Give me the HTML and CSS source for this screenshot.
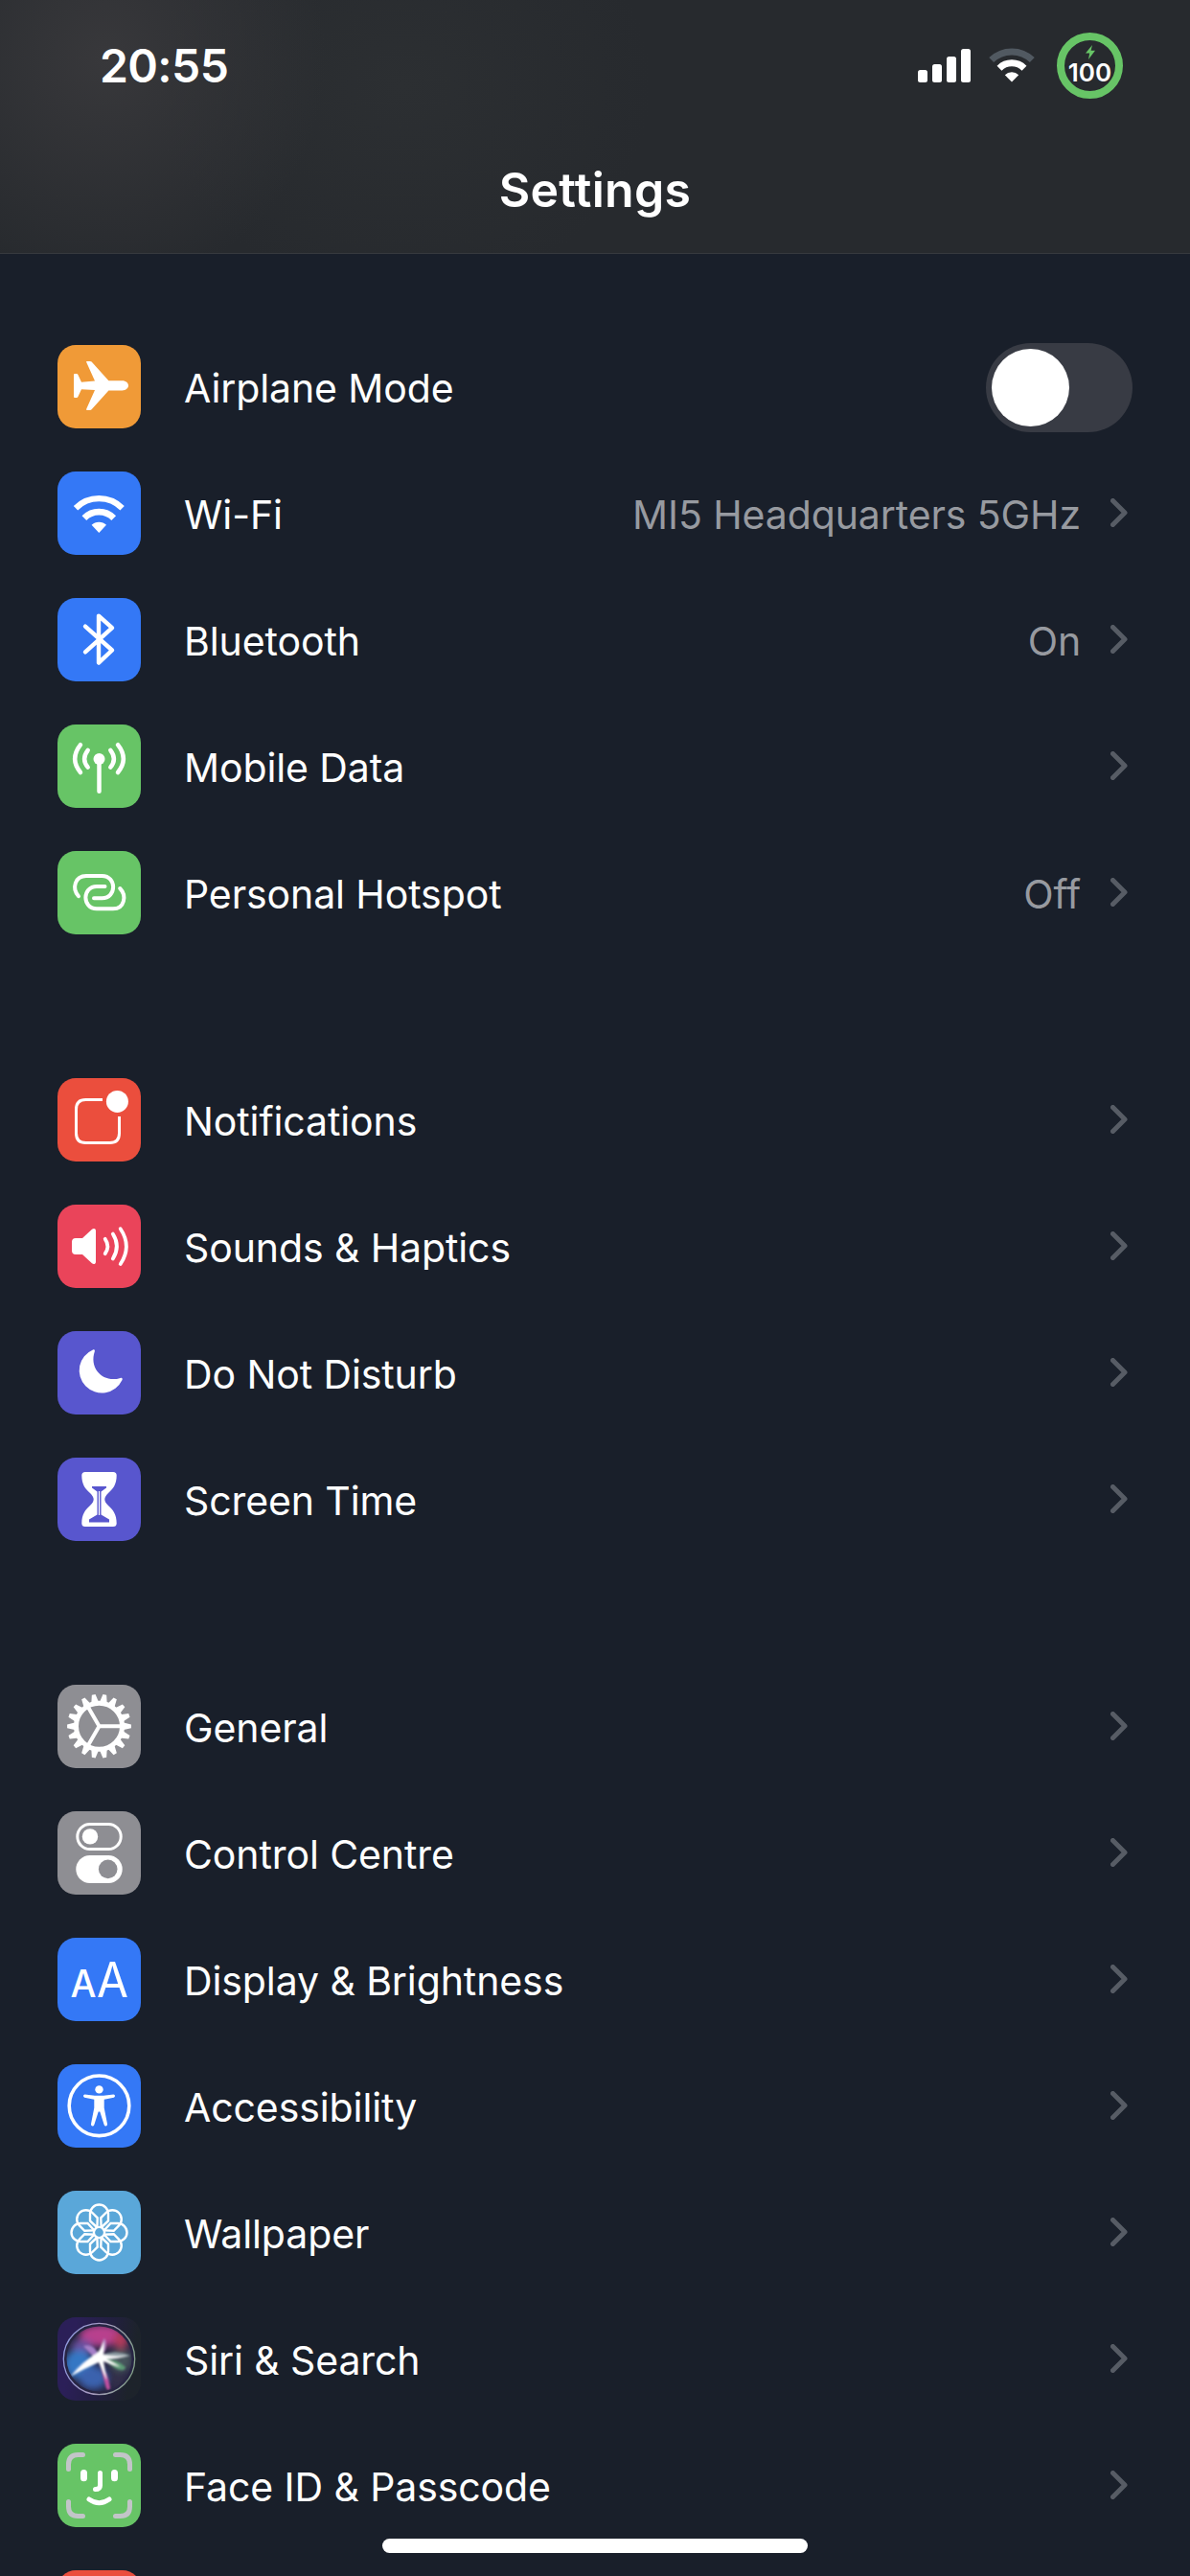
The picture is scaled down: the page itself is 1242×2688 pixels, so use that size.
FILE: index.html
```html
<!DOCTYPE html>
<html lang="en">
<head>
  <meta charset="UTF-8">
  <title>Settings</title>
  <link rel="stylesheet" href="styles.css">
</head>
<body>
  <header class="header">
    <div class="status-bar">
      <span class="time">20:55</span>
      <div class="status-icons">
        <svg class="signal" viewBox="0 0 55 35">
          <rect x="0" y="22" width="10" height="13" rx="2.5"/>
          <rect x="15" y="16" width="10" height="19" rx="2.5"/>
          <rect x="30" y="8" width="10" height="27" rx="2.5"/>
          <rect x="45" y="0" width="10" height="35" rx="2.5"/>
        </svg>
        <svg class="status-wifi" viewBox="0 0 48 36">
          <path class="dim" d="M2.7 12.6A30.5 30.5 0 0 1 45.3 12.6" fill="none" stroke-width="7"/>
          <path d="M11 21.2A18.5 18.5 0 0 1 37 21.2" fill="none" stroke="#fff" stroke-width="7"/>
          <path d="M24 35.5L16.8 28.3A10.2 10.2 0 0 1 31.2 28.3Z" fill="#fff"/>
        </svg>
        <div class="battery">
          <svg class="bolt" viewBox="0 0 10 15"><path d="M7 0L0 8.6H4.2L3 15L10 5.8H5.6Z"/></svg>
          <span>100</span>
        </div>
      </div>
    </div>
    <h1>Settings</h1>
  </header>

  <main class="list">
    <section class="group">
      <div class="row">
        <svg class="icon orange" viewBox="0 0 87 87">
          <path fill="#fff" d="M74 42.3C74 39.6 71.5 37.2 67.5 37.2H53.4L35.6 17.6Q35 17 34 17H30.6Q29.8 17 30.2 18L39 37.6L25 38.7L21.4 31Q21 30 20 30H18Q17 30 17 31V54Q17 55 18 55H20Q21 55 21.4 54L25 46.2L39 47L30.2 66.8Q29.8 68 30.8 68H34Q35 68 35.6 67.3L53.4 47.4H67.5C71.5 47.4 74 45 74 42.3Z"/>
        </svg>
        <span class="label">Airplane Mode</span>
        <span class="toggle"></span>
      </div>
      <div class="row">
        <svg class="icon blue" viewBox="0 0 87 87">
          <g fill="none" stroke="#fff" stroke-width="6.2">
            <path d="M19 38.3A34.3 34.3 0 0 1 67.6 38.3"/>
            <path d="M27.9 48.6A21.5 21.5 0 0 1 58.7 48.6" stroke-width="6.6"/>
          </g>
          <path fill="#fff" d="M43.3 64L35.6 55.8A11 11 0 0 1 51 55.8Z"/>
        </svg>
        <span class="label">Wi-Fi</span>
        <span class="value">MI5 Headquarters 5GHz</span>
        <svg class="chevron" viewBox="0 0 18 30"><path d="M2.5 2.5L15 15L2.5 27.5"/></svg>
      </div>
      <div class="row">
        <svg class="icon blue" viewBox="0 0 87 87">
          <path class="line" stroke-width="4.4" d="M29 29.7L57 54.5L43 67.6V18.6L57 31.2L29 56.3"/>
        </svg>
        <span class="label">Bluetooth</span>
        <span class="value">On</span>
        <svg class="chevron" viewBox="0 0 18 30"><path d="M2.5 2.5L15 15L2.5 27.5"/></svg>
      </div>
      <div class="row">
        <svg class="icon green" viewBox="0 0 87 87">
          <circle cx="43.5" cy="36" r="6" fill="#fff"/>
          <g class="line" stroke-width="4.5">
            <path d="M43.5 38V69.8"/>
            <path d="M31.7 26.8Q24.6 36 31.7 44.6M55.3 26.8Q62.4 36 55.3 44.6"/>
            <path d="M24 21.2Q12.4 36 24 50M63 21.2Q74.6 36 63 50"/>
          </g>
        </svg>
        <span class="label">Mobile Data</span>
        <svg class="chevron" viewBox="0 0 18 30"><path d="M2.5 2.5L15 15L2.5 27.5"/></svg>
      </div>
      <div class="row">
        <svg class="icon green" viewBox="0 0 87 87">
          <g class="line" stroke-width="4">
            <path d="M22 47.2C14.5 38.5 18.5 26 30 26H46.500C62 26 62 49.2 46.5 49.2H38"/>
            <path d="M49.5 37H41C25.5 37 25.5 60.2 41 60.2H58C70 60.2 72.5 46.5 65.2 39"/>
          </g>
        </svg>
        <span class="label">Personal Hotspot</span>
        <span class="value">Off</span>
        <svg class="chevron" viewBox="0 0 18 30"><path d="M2.5 2.5L15 15L2.5 27.5"/></svg>
      </div>
    </section>

    <section class="group">
      <div class="row">
        <svg class="icon red" viewBox="0 0 87 87">
          <path fill="none" stroke="#fff" stroke-width="3" d="M47 22.5H29.5Q19.5 22.5 19.5 32.5V57.5Q19.5 67.5 29.5 67.5H54.5Q64.5 67.5 64.5 57.5V40"/>
          <circle cx="62.4" cy="24.4" r="11.5" fill="#fff"/>
        </svg>
        <span class="label">Notifications</span>
        <svg class="chevron" viewBox="0 0 18 30"><path d="M2.5 2.5L15 15L2.5 27.5"/></svg>
      </div>
      <div class="row">
        <svg class="icon pink" viewBox="0 0 87 87">
          <path fill="#fff" d="M19 35H26L36 25.8Q37.5 24.7 39 25.3Q40 25.8 40 27.5V59.5Q40 61.2 39 61.7Q37.5 62.3 36 61.2L26 52H19Q15 52 15 48V39Q15 35 19 35Z"/>
          <g class="line" stroke-width="3.8">
            <path d="M49.7 35.8Q55 43.5 49.7 51.2"/>
            <path d="M57.8 30.5Q66 43.5 57.8 56.5"/>
            <path d="M65.7 25.2Q78 43.5 65.7 62"/>
          </g>
        </svg>
        <span class="label">Sounds &amp; Haptics</span>
        <svg class="chevron" viewBox="0 0 18 30"><path d="M2.5 2.5L15 15L2.5 27.5"/></svg>
      </div>
      <div class="row">
        <svg class="icon purple" viewBox="0 0 87 87">
          <path fill="#fff" d="M38.8 21.2C39.3 19.6 38.4 18.9 37 19.4A23.5 23.5 0 1 0 67.5 51C68.2 49.3 67.3 48.3 65.6 48.9C49 54.5 32.5 40 38.8 21.2Z"/>
        </svg>
        <span class="label">Do Not Disturb</span>
        <svg class="chevron" viewBox="0 0 18 30"><path d="M2.5 2.5L15 15L2.5 27.5"/></svg>
      </div>
      <div class="row">
        <svg class="icon purple" viewBox="0 0 87 87">
          <path fill="#fff" d="M29 15H58Q61.7 15 61.7 18.5C61.7 28 58 32.5 53 37Q49.3 40.5 49.3 43.5Q49.3 46.5 53 50C58 54.5 61.7 59 61.7 68.5Q61.7 72 58 72H29Q25.3 72 25.3 68.5C25.3 59 29 54.5 34 50Q37.7 46.5 37.7 43.5Q37.7 40.5 34 37C29 32.5 25.3 28 25.3 18.5Q25.3 15 29 15Z"/>
          <path class="cut" d="M36 30H51V31.5L45.5 35.5V59.5L54 64.5V67.5H33V64.5L41.5 59.5V35.5L36 31.5Z"/>
          <path stroke="#fff" stroke-width="1.2" d="M43.5 35V60"/>
        </svg>
        <span class="label">Screen Time</span>
        <svg class="chevron" viewBox="0 0 18 30"><path d="M2.5 2.5L15 15L2.5 27.5"/></svg>
      </div>
    </section>

    <section class="group">
      <div class="row">
        <svg class="icon grey" viewBox="0 0 87 87">
          <g fill="#fff">
            <path id="tooth" d="M68 39.3L76.9 41.4V45.2L68 47.3ZM19 39.3L10.1 41.4V45.2L19 47.3Z"/>
            <use href="#tooth" transform="rotate(20 43.5 43.3)"/>
            <use href="#tooth" transform="rotate(40 43.5 43.3)"/>
            <use href="#tooth" transform="rotate(60 43.5 43.3)"/>
            <use href="#tooth" transform="rotate(80 43.5 43.3)"/>
            <use href="#tooth" transform="rotate(100 43.5 43.3)"/>
            <use href="#tooth" transform="rotate(120 43.5 43.3)"/>
            <use href="#tooth" transform="rotate(140 43.5 43.3)"/>
            <use href="#tooth" transform="rotate(160 43.5 43.3)"/>
          </g>
          <circle cx="43.5" cy="43.3" r="24" fill="none" stroke="#fff" stroke-width="5"/>
          <path stroke="#fff" stroke-width="4" fill="none" d="M67 43.3H43.5L31.5 22.5M43.5 43.3L31.5 64"/>
        </svg>
        <span class="label">General</span>
        <svg class="chevron" viewBox="0 0 18 30"><path d="M2.5 2.5L15 15L2.5 27.5"/></svg>
      </div>
      <div class="row">
        <svg class="icon grey" viewBox="0 0 87 87">
          <rect x="20.8" y="13.5" width="45.4" height="26" rx="13" fill="none" stroke="#fff" stroke-width="3"/>
          <circle cx="34" cy="26.4" r="8.2" fill="#fff"/>
          <rect x="19.3" y="46" width="48.4" height="29" rx="14.5" fill="#fff"/>
          <circle class="cut" cx="52.7" cy="60.4" r="9.8"/>
        </svg>
        <span class="label">Control Centre</span>
        <svg class="chevron" viewBox="0 0 18 30"><path d="M2.5 2.5L15 15L2.5 27.5"/></svg>
      </div>
      <div class="row">
        <svg class="icon blue letters" viewBox="0 0 87 87">
          <text class="small" x="13.5" y="61.5" font-size="39" textLength="27" lengthAdjust="spacingAndGlyphs">A</text>
          <text x="41" y="61.5" font-size="50" textLength="33" lengthAdjust="spacingAndGlyphs">A</text>
        </svg>
        <span class="label">Display &amp; Brightness</span>
        <svg class="chevron" viewBox="0 0 18 30"><path d="M2.5 2.5L15 15L2.5 27.5"/></svg>
      </div>
      <div class="row">
        <svg class="icon blue" viewBox="0 0 87 87">
          <circle cx="43.5" cy="43.3" r="31.3" fill="none" stroke="#fff" stroke-width="3.6"/>
          <circle cx="43.5" cy="26.4" r="4.2" fill="#fff"/>
          <path fill="#fff" d="M28.5 31.4L39 32.8H48L58.5 31.4Q60 31.4 60 33Q60 34.3 58.8 34.7L48.7 36.8V45.5L52 62.3Q52.2 64 50.8 64.4Q49.3 64.7 48.7 63.2L44.3 49.5H42.7L38.3 63.2Q37.7 64.7 36.2 64.4Q34.8 64 35 62.3L38.3 45.5V36.8L28.2 34.7Q27 34.3 27 33Q27 31.4 28.5 31.4Z"/>
        </svg>
        <span class="label">Accessibility</span>
        <svg class="chevron" viewBox="0 0 18 30"><path d="M2.5 2.5L15 15L2.5 27.5"/></svg>
      </div>
      <div class="row">
        <svg class="icon sky" viewBox="0 0 87 87">
          <g fill="none" stroke="#fff" stroke-width="2.4">
            <path id="petal" d="M41.5 38.5L34 31.5V24A9.5 9.5 0 0 1 53 24V31.5L45.5 38.5"/>
            <use href="#petal" transform="rotate(45 43.5 43.5)"/>
            <use href="#petal" transform="rotate(90 43.5 43.5)"/>
            <use href="#petal" transform="rotate(135 43.5 43.5)"/>
            <use href="#petal" transform="rotate(180 43.5 43.5)"/>
            <use href="#petal" transform="rotate(225 43.5 43.5)"/>
            <use href="#petal" transform="rotate(270 43.5 43.5)"/>
            <use href="#petal" transform="rotate(315 43.5 43.5)"/>
            <circle cx="43.5" cy="43.5" r="5.6"/>
          </g>
        </svg>
        <span class="label">Wallpaper</span>
        <svg class="chevron" viewBox="0 0 18 30"><path d="M2.5 2.5L15 15L2.5 27.5"/></svg>
      </div>
      <div class="row">
        <svg class="icon siri" viewBox="0 0 87 87">
          <defs>
            <clipPath id="orb"><circle cx="43.5" cy="43.5" r="34"/></clipPath>
            <linearGradient id="rim" x1="0" y1="0.3" x2="1" y2="0.5">
              <stop offset="0" stop-color="#8f9be0"/>
              <stop offset="0.5" stop-color="#a79ac0"/>
              <stop offset="1" stop-color="#87a48d"/>
            </linearGradient>
            <filter id="soft" x="-50%" y="-50%" width="200%" height="200%"><feGaussianBlur stdDeviation="3.5"/></filter>
            <filter id="glow" x="-50%" y="-50%" width="200%" height="200%"><feGaussianBlur stdDeviation="0.8"/></filter>
          </defs>
          <circle cx="43.5" cy="43.5" r="37" fill="#272543"/>
          <g clip-path="url(#orb)">
            <g filter="url(#soft)">
              <ellipse cx="46" cy="19" rx="23" ry="11" fill="#b8418d"/>
              <ellipse cx="66" cy="24" rx="8" ry="9" fill="#b03b5c"/>
              <ellipse cx="26" cy="31" rx="11" ry="8" fill="#69509f"/>
              <ellipse cx="22" cy="49" rx="15" ry="15" fill="#3577c4"/>
              <ellipse cx="37" cy="63" rx="15" ry="12" fill="#3a62ae"/>
              <ellipse cx="66" cy="45" rx="12" ry="12" fill="#46545b"/>
              <ellipse cx="62" cy="65" rx="9" ry="9" fill="#302f48"/>
            </g>
            <g filter="url(#glow)">
              <path fill="#a57fc8" d="M27 30Q38 26 44 41L38 42Z"/>
              <path fill="#b98ac4" d="M42 40L48.500 22Q52 24 50 34L46 42Z"/>
              <path fill="#6fa3e0" d="M14 61Q25 44 42 39L46 45Z"/>
              <path fill="#8d9ba2" d="M44 40Q60 33 76 40Q62 44 46 44Z"/>
              <path fill="#5b9a74" d="M46 43Q62 43 71 52Q70 58 60 53Z"/>
              <path fill="#c150a0" d="M43 44Q53 58 55 74Q52 79 50 71Z"/>
              <path fill="#fff" d="M14 61.500Q26 48 37 40Q44 38 48 25L48 39Q58 42 75 40Q60 43.500 51 43.500Q58 47 66 52Q56 49.500 48 46L51.500 66L43 47Q29 53 14 61.500Z"/>
            </g>
          </g>
          <circle cx="43.5" cy="43.5" r="37.2" fill="none" stroke="url(#rim)" stroke-width="1.300"/>
        </svg>
        <span class="label">Siri &amp; Search</span>
        <svg class="chevron" viewBox="0 0 18 30"><path d="M2.5 2.5L15 15L2.5 27.5"/></svg>
      </div>
      <div class="row">
        <svg class="icon green" viewBox="0 0 87 87">
          <path class="corners" d="M11.5 26.5V21.5Q11.5 11.5 21.5 11.5H26.5M60.5 11.5H65.5Q75.5 11.5 75.5 21.5V26.5M75.5 60.5V65.5Q75.5 75.5 65.5 75.5H60.5M26.5 75.5H21.5Q11.5 75.5 11.5 65.5V60.5"/>
          <path class="line" stroke-width="7" d="M27.5 30.5V35.7M59.5 30.5V35.7"/>
          <path class="line" stroke-width="5" d="M44.5 30.5V43.5Q44.5 47.6 39.5 47.6M33 58Q43.5 65.5 54 58"/>
        </svg>
        <span class="label">Face ID &amp; Passcode</span>
        <svg class="chevron" viewBox="0 0 18 30"><path d="M2.5 2.5L15 15L2.5 27.5"/></svg>
      </div>
      <div class="row">
        <svg class="icon red" viewBox="0 0 87 87"></svg>
      </div>
    </section>
  </main>

  <div class="home-indicator"></div>
</body>
</html>
```
FILE: styles.css
```css
* { box-sizing: border-box; }

html { overflow: hidden; }

body {
  position: relative;
  margin: 0;
  width: 1242px;
  height: 2688px;
  overflow: hidden;
  background: #191f2a;
  color: #fff;
  font-family: Inter, "Liberation Sans", sans-serif;
}

.header {
  height: 265px;
  border-bottom: 1px solid #36393e;
  background:
    radial-gradient(ellipse 230px 240px at 110px 60px, #38383b, rgba(56, 56, 59, 0)),
    radial-gradient(ellipse 260px 220px at 420px 90px, #2c2f32, rgba(44, 47, 50, 0)),
    #272a2e;
}

.status-bar {
  display: flex;
  justify-content: space-between;
  align-items: center;
  height: 136px;
  padding: 0 70px 0 104px;
}
.time { font-size: 48px; font-weight: 600; letter-spacing: -0.6px; }

.status-icons { display: flex; align-items: center; }
.signal { width: 55px; height: 35px; fill: #fff; }
.status-wifi { width: 48px; height: 36px; margin: 0 23px 0 19px; }
.status-wifi .dim { stroke: #515961; }

.battery {
  display: flex;
  flex-direction: column;
  align-items: center;
  width: 69px;
  height: 69px;
  padding-top: 5px;
  border: 8px solid #67c466;
  border-radius: 50%;
  font-size: 26px;
  font-weight: 600;
  line-height: 26px;
}
.bolt { width: 10px; height: 15px; fill: #67c466; }
.battery span { margin-top: 1px; }

h1 {
  margin: 31px 0 0;
  font-size: 50px;
  font-weight: 600;
  letter-spacing: 0.3px;
  line-height: 62px;
  text-align: center;
}

.list { padding-top: 73px; }
.group { margin-bottom: 105px; }

.row {
  display: flex;
  align-items: center;
  height: 132px;
  padding: 0 60px;
}

.icon {
  flex: none;
  width: 87px;
  height: 87px;
  margin: 0 45px 1px 0;
  border-radius: 19px;
}
.orange { background: #f09a37; }
.blue { background: #3478f6; }
.green { background: #67c466; }
.red { background: #eb4e3d; }
.pink { background: #ea445a; }
.purple { background: #5856ce; }
.grey { background: #8e8e93; }
.sky { background: #5aa7d9; }
.siri { background: linear-gradient(100deg, #2b1f58 20%, #221f40 55%, #1d232b 85%); }

.line { fill: none; stroke: #fff; stroke-linecap: round; stroke-linejoin: round; }
.corners { fill: none; stroke: #c2c5c8; stroke-width: 5; stroke-linecap: round; }
.purple .cut { fill: #5856ce; }
.grey .cut { fill: #8e8e93; }
.letters { fill: #fff; font-weight: 400; }
.letters .small { font-weight: 500; }

.label,
.value {
  padding-top: 2px;
  font-size: 41px;
  letter-spacing: -0.1px;
}
.label { flex: 1; }
.value {
  margin-right: 31px;
  color: #979aa0;
}

.chevron {
  width: 18px;
  height: 30px;
  margin: 0 5px 2px 0;
  fill: none;
  stroke: #575c65;
  stroke-width: 5;
  stroke-linecap: round;
  stroke-linejoin: round;
}

.toggle {
  width: 153px;
  height: 93px;
  padding: 6px;
  border-radius: 47px;
  background: #383b44;
}
.toggle::before {
  content: "";
  display: block;
  width: 81px;
  height: 81px;
  border-radius: 50%;
  background: #fff;
}

.home-indicator {
  position: absolute;
  left: 399px;
  bottom: 24px;
  width: 444px;
  height: 15px;
  border-radius: 8px;
  background: #fff;
}
```
